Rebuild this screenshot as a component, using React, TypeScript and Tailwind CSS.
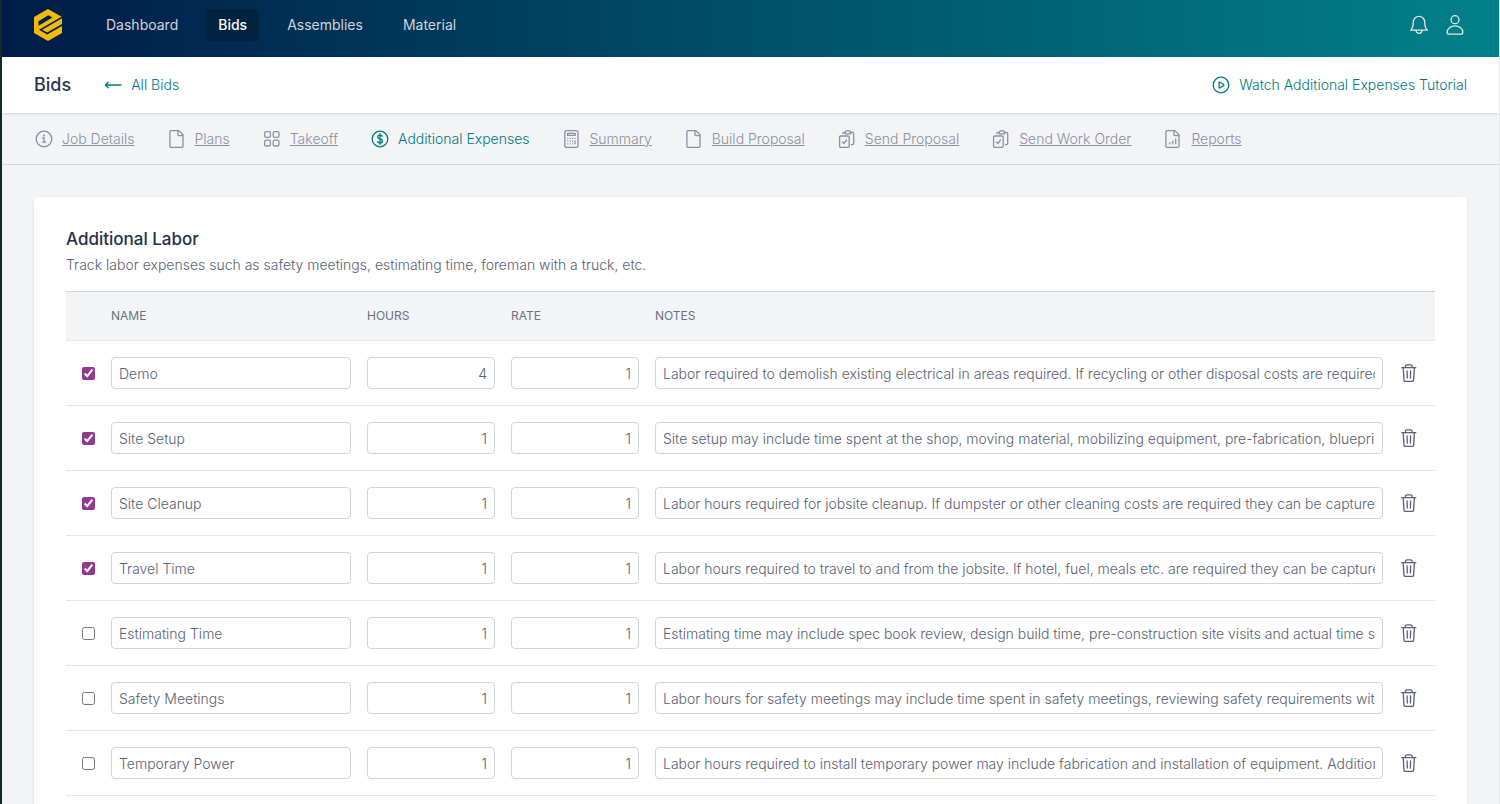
import { useState } from "react";
import type { ReactNode } from "react";

const navLinks = ["Dashboard", "Bids", "Assemblies", "Material"];

const tabs = [
  { label: "Job Details", icon: "info" },
  { label: "Plans", icon: "file" },
  { label: "Takeoff", icon: "grid" },
  { label: "Additional Expenses", icon: "dollar" },
  { label: "Summary", icon: "calculator" },
  { label: "Build Proposal", icon: "file" },
  { label: "Send Proposal", icon: "clipboard" },
  { label: "Send Work Order", icon: "clipboard" },
  { label: "Reports", icon: "report" },
];

const initialRows = [
  {
    enabled: true,
    name: "Demo",
    hours: "4",
    rate: "1",
    notes:
      "Labor required to demolish existing electrical in areas required. If recycling or other disposal costs are required they can be captured in direct costs.",
  },
  {
    enabled: true,
    name: "Site Setup",
    hours: "1",
    rate: "1",
    notes:
      "Site setup may include time spent at the shop, moving material, mobilizing equipment, pre-fabrication, blueprint review and layout.",
  },
  {
    enabled: true,
    name: "Site Cleanup",
    hours: "1",
    rate: "1",
    notes:
      "Labor hours required for jobsite cleanup. If dumpster or other cleaning costs are required they can be captured in direct costs.",
  },
  {
    enabled: true,
    name: "Travel Time",
    hours: "1",
    rate: "1",
    notes:
      "Labor hours required to travel to and from the jobsite. If hotel, fuel, meals etc. are required they can be captured in direct costs.",
  },
  {
    enabled: false,
    name: "Estimating Time",
    hours: "1",
    rate: "1",
    notes:
      "Estimating time may include spec book review, design build time, pre-construction site visits and actual time spent estimating.",
  },
  {
    enabled: false,
    name: "Safety Meetings",
    hours: "1",
    rate: "1",
    notes:
      "Labor hours for safety meetings may include time spent in safety meetings, reviewing safety requirements with the crew.",
  },
  {
    enabled: false,
    name: "Temporary Power",
    hours: "1",
    rate: "1",
    notes:
      "Labor hours required to install temporary power may include fabrication and installation of equipment. Additional material can be captured in the takeoff.",
  },
];

// Outline icons, all on a 20px grid
const iconShapes: Record<string, ReactNode> = {
  info: (
    <>
      <circle cx="10" cy="10" r="7.8" />
      <path d="M8.7 9h1.4v4M8.5 13.2h3.2" />
      <circle cx="9.9" cy="6.6" r="0.4" fill="currentColor" />
    </>
  ),
  file: (
    <>
      <path d="M4 1.6h7.8L16 5.8v11.4a1.1 1.1 0 0 1-1.1 1.1H4a1.1 1.1 0 0 1-1.1-1.1V2.7A1.1 1.1 0 0 1 4 1.6z" />
      <path d="M10.9 1.8v3.8A1.1 1.1 0 0 0 12 6.7h3.8" />
    </>
  ),
  grid: (
    <>
      <rect x="2.6" y="2.6" width="5.8" height="5.8" rx="1.6" />
      <rect x="11.2" y="2.6" width="5.8" height="5.8" rx="1.6" />
      <rect x="2.6" y="11.2" width="5.8" height="5.8" rx="1.6" />
      <rect x="11.2" y="11.2" width="5.8" height="5.8" rx="1.6" />
    </>
  ),
  dollar: (
    <>
      <circle cx="10" cy="10" r="7.8" />
      <path d="M12.2 7.2c-.4-.7-1.2-1.1-2.2-1.1-1.3 0-2.3.7-2.3 1.9 0 2.7 4.7 1.3 4.7 4 0 1.2-1.1 1.9-2.4 1.9-1.1 0-2-.5-2.4-1.3M10 4.7v10.6" />
    </>
  ),
  calculator: (
    <>
      <rect x="2.8" y="1.6" width="13.2" height="16.8" rx="1.6" />
      <rect x="5.6" y="4.4" width="7.6" height="2" />
      <path d="M5.8 9.4h0M8.2 9.4h0M10.6 9.4h0M13 9.4h0M5.8 12h0M8.2 12h0M10.6 12h0M5.8 14.8h0M8.2 14.8h0M10.6 14.8h0M13 12v2.8" />
    </>
  ),
  clipboard: (
    <>
      <rect x="2.6" y="7" width="9.6" height="11.4" rx="1.1" />
      <path d="M5.4 12.9l1.5 1.6 2.6-3.5" />
      <path d="M5.8 4.600V4.300a1 1 0 0 1 1-1h1.400M13.400 3.300h2a1.300 1.300 0 0 1 1.300 1.300v9.700a1.300 1.300 0 0 1-1.300 1.300h-1" />
      <path d="M8 4.800c0-2 1.200-3.100 2.900-3.100s2.900 1.100 2.900 3.100z" />
    </>
  ),
  report: (
    <>
      <path d="M4 1.6h7.8L16 5.8v11.4a1.1 1.1 0 0 1-1.1 1.1H4a1.1 1.1 0 0 1-1.1-1.1V2.7A1.1 1.1 0 0 1 4 1.6z" />
      <path d="M10.9 1.8v3.8A1.1 1.1 0 0 0 12 6.7h3.8M6.800 13.600v1.200M9.800 12v2.800M12.700 10v4.800" />
    </>
  ),
  play: (
    <>
      <circle cx="10" cy="10" r="7.8" />
      <path d="M8.1 7.3v5.4a.4.4 0 0 0 .6.3l4.2-2.6a.4.4 0 0 0 0-.7L8.7 7a.4.4 0 0 0-.6.3z" />
    </>
  ),
  arrow: <path d="M18 10H2.4M5.2 7.2L2.4 10l2.8 2.8" />,
  bell: (
    <>
      <path d="M10 1.3A5.7 5.7 0 0 1 15.7 7c0 5 1.1 6.7 2.6 8.2H1.7C3.2 13.7 4.3 12 4.3 7A5.7 5.7 0 0 1 10 1.3z" />
      <path d="M7.1 15.4a2.9 2.9 0 0 0 5.8 0" />
    </>
  ),
  user: (
    <>
      <circle cx="10" cy="4.7" r="4" />
      <path d="M2.2 17.2a7.8 6.3 0 0 1 15.6 0c0 1.3-.8 2-2 2H4.2c-1.2 0-2-.7-2-2z" />
    </>
  ),
  trash: (
    <>
      <path d="M2.8 4.7h14M4.2 4.9l.8 12.2a1.4 1.4 0 0 0 1.4 1.3h6.8a1.4 1.4 0 0 0 1.4-1.3l.8-12.2" />
      <path d="M6.4 4.5v-.9a1.8 1.8 0 0 1 1.8-1.8h3.2a1.8 1.8 0 0 1 1.8 1.8v.9M8.1 7.8l.2 7.2M11.6 7.8l-.2 7.2" />
    </>
  ),
};

function Icon({ name }: { name: string }) {
  return (
    <svg
      viewBox="0 0 20 20"
      className="size-5 shrink-0"
      fill="none"
      stroke="currentColor"
      strokeWidth="1.3"
      strokeLinecap="round"
      strokeLinejoin="round"
      aria-hidden="true"
    >
      {iconShapes[name]}
    </svg>
  );
}

function Logo() {
  return (
    <svg viewBox="0 0 28 32" className="h-8 w-7" aria-hidden="true">
      <path d="M14 0 28 8V24L14 32 0 24V8z" fill="#f2b90f" />
      <path d="M4.5 16.8V12.2L14.3 6.3 18.4 8.6z" fill="#001d4b" />
      <path
        d="M28.5 9 8.2 20.7 13.2 23.6 28.5 14.8V16.6L13.2 25.4 5 20.7 28.5 7.2z"
        fill="#001d4b"
      />
    </svg>
  );
}

const inputClass =
  "block h-8 w-full rounded border border-gray-300 bg-white px-[7px] text-sm font-light text-[#5a6172]";

export default function App() {
  const [rows, setRows] = useState(initialRows);

  const updateRow = (index: number, changes: Partial<(typeof initialRows)[0]>) => {
    setRows(rows.map((row, i) => (i === index ? { ...row, ...changes } : row)));
  };

  const removeRow = (index: number) => {
    setRows(rows.filter((_, i) => i !== index));
  };

  return (
    <div className="h-screen overflow-hidden border-r border-l-2 border-r-gray-200 border-l-[#14292b] bg-gray-100 font-['Inter',sans-serif] text-sm font-light text-[#5a6172]">
      <header className="flex h-[57px] items-center bg-linear-to-r/srgb from-[#001b48] via-[#005069] to-[#02818a] px-8 pb-[7px]">
        <a href="#" aria-label="Home" className="mr-8">
          <Logo />
        </a>
        <nav className="flex gap-4">
          {navLinks.map((link) => (
            <a
              key={link}
              href="#"
              className={
                link === "Bids"
                  ? "rounded bg-[#02233f] px-3 py-1.5 font-medium text-white"
                  : "px-3 py-1.5 font-normal text-gray-300"
              }
            >
              {link}
            </a>
          ))}
        </nav>
        <div className="ml-auto flex gap-3 text-gray-200">
          <button type="button" aria-label="Notifications" className="p-0.5">
            <Icon name="bell" />
          </button>
          <button type="button" aria-label="Account" className="p-0.5">
            <Icon name="user" />
          </button>
        </div>
      </header>

      <div className="relative flex h-14 items-center bg-white px-8 shadow-sm">
        <h1 className="mr-8 text-lg font-medium text-[#2b3350]">Bids</h1>
        <a href="#" className="flex items-center gap-2 text-[#007a7f]">
          <Icon name="arrow" />
          All Bids
        </a>
        <a href="#" className="ml-auto flex items-center gap-2 text-[#007a7f]">
          <Icon name="play" />
          Watch Additional Expenses Tutorial
        </a>
      </div>

      <nav className="flex h-[52px] items-center gap-8 border-b border-gray-300 px-8">
        {tabs.map((tab) => (
          <a
            key={tab.label}
            href="#"
            className={
              tab.icon === "dollar"
                ? "flex items-center gap-2 text-[#007a7f]"
                : "flex items-center gap-2 text-[#8b90a0]"
            }
          >
            <Icon name={tab.icon} />
            <span className={tab.icon === "dollar" ? "" : "underline"}>{tab.label}</span>
          </a>
        ))}
      </nav>

      <main className="p-8">
        <section className="rounded-sm bg-white px-8 pt-7 pb-8 shadow-sm">
          <h2 className="text-[17px] leading-7 font-medium text-[#252f4a]">Additional Labor</h2>
          <p className="mt-0.5 mb-4">
            Track labor expenses such as safety meetings, estimating time, foreman with a truck, etc.
          </p>
          <table className="w-full table-fixed">
            <thead>
              <tr className="h-[49px] border-t border-b border-t-gray-300 border-b-gray-200 bg-gray-100 text-left text-xs text-gray-500">
                <th className="w-[37px]"></th>
                <th className="w-64 px-2 font-normal">NAME</th>
                <th className="w-36 px-2 font-normal">HOURS</th>
                <th className="w-36 px-2 font-normal">RATE</th>
                <th className="px-2 font-normal">NOTES</th>
                <th className="w-11"></th>
              </tr>
            </thead>
            <tbody>
              {rows.map((row, i) => (
                <tr key={row.name} className="h-[65px] border-b border-gray-200">
                  <td className="pr-2 pl-4">
                    <input
                      type="checkbox"
                      aria-label={`Include ${row.name}`}
                      checked={row.enabled}
                      onChange={(e) => updateRow(i, { enabled: e.target.checked })}
                      className="block size-[13px] accent-[#91388f]"
                    />
                  </td>
                  <td className="px-2">
                    <input
                      aria-label="Name"
                      value={row.name}
                      onChange={(e) => updateRow(i, { name: e.target.value })}
                      className={inputClass}
                    />
                  </td>
                  <td className="px-2">
                    <input
                      aria-label="Hours"
                      value={row.hours}
                      onChange={(e) => updateRow(i, { hours: e.target.value })}
                      className={`${inputClass} text-right`}
                    />
                  </td>
                  <td className="px-2">
                    <input
                      aria-label="Rate"
                      value={row.rate}
                      onChange={(e) => updateRow(i, { rate: e.target.value })}
                      className={`${inputClass} text-right`}
                    />
                  </td>
                  <td className="px-2">
                    <input
                      aria-label="Notes"
                      value={row.notes}
                      onChange={(e) => updateRow(i, { notes: e.target.value })}
                      className={inputClass}
                    />
                  </td>
                  <td className="pr-4 pl-2">
                    <button
                      type="button"
                      aria-label={`Delete ${row.name}`}
                      onClick={() => removeRow(i)}
                      className="block"
                    >
                      <Icon name="trash" />
                    </button>
                  </td>
                </tr>
              ))}
            </tbody>
          </table>
        </section>
      </main>
    </div>
  );
}
